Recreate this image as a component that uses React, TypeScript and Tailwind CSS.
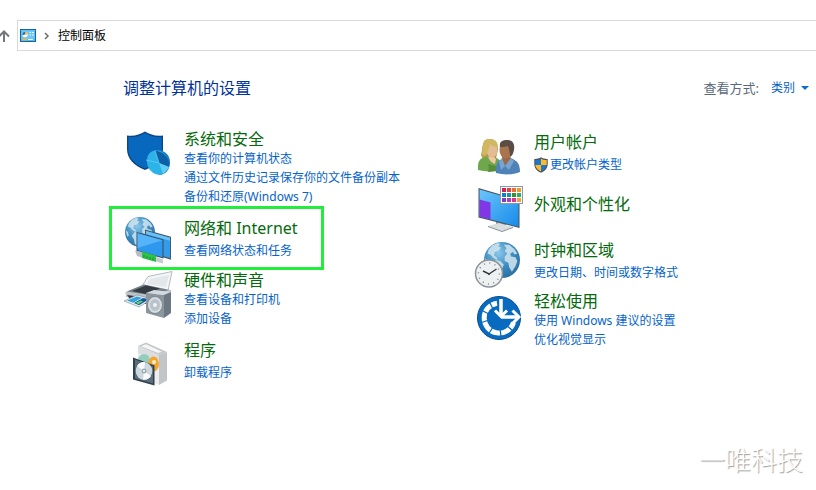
import type { ReactNode } from "react";

function Icon({ children }: { children: ReactNode }) {
  return (
    <svg viewBox="0 0 48 48" className="size-12 shrink-0 overflow-visible" aria-hidden="true">
      {children}
    </svg>
  );
}

function Globe({ id, cx, cy, r }: { id: string; cx: number; cy: number; r: number }) {
  return (
    <>
      <defs>
        <radialGradient id={id} cx="0.4" cy="0.3" r="0.75">
          <stop offset="0" stopColor="#8cc8ea" />
          <stop offset="0.55" stopColor="#3b8cc0" />
          <stop offset="1" stopColor="#2a6da0" />
        </radialGradient>
      </defs>
      <circle cx={cx} cy={cy} r={r} fill={`url(#${id})`} />
      <g transform={`translate(${cx - r} ${cy - r}) scale(${r / 20})`} fill="#d3e5ef" opacity="0.85">
        <path d="M5 9 9 4l6-3 3 1-2 3 3 1-3 4-4 1-1 4 3 2 1 3-4-2-4-4-3-1z" />
        <path d="M13 20l5 1 4 4-2 5-3 4-1 4-3-2-1-6-3-5z" />
        <path d="M22 3l6 0 6 5 3 5-3 1-2-3-3 2 1 3 5 1 2 4-2 6-4 6-3-5-1-5-4-2 0-5 3-3-3-3 2-3z" />
        <path d="M1 18l3 2 1 5-2 1z" />
      </g>
    </>
  );
}

function SecurityIcon() {
  return (
    <Icon>
      <path d="M3 6.500c7.500 1 12.500-.8 18-4 5.500 3.200 10.500 5 18 4V20c0 9.500-7 16.500-18 21C10 36.500 3 29.500 3 20z" fill="#0a4584" />
      <path d="M4.300 8c7 .7 11.500-1 16.700-4C26.200 7 30.700 8.700 37.700 8v12c0 8.800-6.400 15.200-16.700 19.500C10.700 35.200 4.300 28.800 4.300 20z" fill="#0868bd" />
      <path d="M36 21c7 2 10.500 7 10 13.500C45.500 41 41 46 35.500 46l-5-4z" fill="#1683bd" />
      <ellipse cx="33.500" cy="33.500" rx="10.500" ry="12.500" fill="#2cb3e8" transform="rotate(-20 33.500 33.500)" />
      <path d="M31 21.500l4 12.500 10 4c1.500-8-5-15.500-14-16.500z" fill="#0f5fa8" />
      <path d="M35 34l4 11 5-5 1-2z" fill="#5fd0f2" />
      <path d="M31 21.500 35 34l-13-3" fill="none" stroke="#67cdf0" strokeWidth="0.8" />
    </Icon>
  );
}

function NetworkIcon() {
  return (
    <Icon>
      <Globe id="globe-network" cx={16} cy={17} r={15} />
      <path d="m21 14.500 26 7.200v23L38 42V26l-17-5z" fill="#4b5a66" />
      <path d="m22 16 24 6.700v20.200L39 41V25l-17-5z" fill="#349be9" />
      <path d="m22 16 24 6.700v3L22 19z" fill="#69c2f7" />
      <path d="m12.500 17 27 7.500v19l-27-7.500z" fill="#3b4c5a" />
      <path d="m13.500 18.300 25 7V42.200l-25-7z" fill="#2e98ef" />
      <path d="m13.500 18.300 25 7L13.500 33z" fill="#55b4f7" />
      <path d="m11 35.500 7 1.500v5.500L13 41z" fill="#b7bdc1" />
      <path d="m18 36.500 14 4v6.500l-14-4z" fill="#2ec249" />
      <path d="M20 40v3M23 41v3M26 42v3M29 42.500v3" stroke="#158532" strokeWidth="0.8" />
      <path d="m32 42 7 2.500v4L32 46.500z" fill="#c6cbcf" />
    </Icon>
  );
}

function HardwareIcon() {
  return (
    <Icon>
      <path d="M24 6.500 48 1.500 44 21 18 16z" fill="#f3f5f6" stroke="#a5adb2" strokeWidth="0.8" />
      <path d="m26 9 19-4-3 12-19-3z" fill="#e3e7ea" />
      <path d="m1.500 22 18-7.500L47 20v5L24 31 2 27z" fill="#bcc4c9" />
      <path d="m3 21.500 17-7 25 5.500-20 5z" fill="#747d85" />
      <path d="m8 21 14-5.500 14 3-14 5.500z" fill="#343b42" />
      <path d="m3 25 22 3v7L6 29z" fill="#303942" />
      <path d="m0 31 13-6 15 4-13 8z" fill="#e8edf0" stroke="#7a858e" strokeWidth="0.6" />
      <path d="m3 30.500 10-4 5 1.200-9 5z" fill="#2fa4dd" />
      <path d="m10 33 9-5 6 1.200-10 6z" fill="#1458a4" />
      <path d="m12 32.500 5-2 2 1-5 3z" fill="#62cf70" />
      <path d="m22 23 18 2v23L22 43z" fill="#8b969f" />
      <path d="m22 23 8-3 17 2-7 3z" fill="#d4dbe0" />
      <path d="m40 25 7-3v21l-7 5z" fill="#6b7883" />
      <ellipse cx="31" cy="35" rx="7.500" ry="8.500" fill="#d5dbdf" stroke="#727d86" strokeWidth="0.8" />
      <ellipse cx="31" cy="35" rx="5" ry="6" fill="#b9c2c9" />
      <circle cx="31" cy="35" r="2" fill="#eff3f5" />
    </Icon>
  );
}

function ProgramsIcon() {
  return (
    <Icon>
      <path d="m14 6 21 8.500V45l-21-8z" fill="#eceded" />
      <path d="m14 6 8-3.500 21 9.500-8 3z" fill="#c4c7c9" />
      <path d="m17 6.300 5-2 16 7.500-4 1.200z" fill="#f5f6f6" />
      <path d="m14 6 21 9v5l-21-7z" fill="#dcddde" />
      <path d="m35 15 8-3v28.500l-8 4.500z" fill="#c2c5c8" />
      <circle cx="20" cy="20" r="6" fill="#93cdbd" />
      <ellipse cx="29.500" cy="24" rx="5.500" ry="7.500" fill="#f5a52d" />
      <circle cx="30" cy="22" r="2" fill="#fff1d1" />
      <path d="m9 17.500 21.500 8v20L9 39.500z" fill="#303f4c" />
      <path d="m11 19.500 18 7v17l-18-5z" fill="#5a6d7b" />
      <ellipse cx="20" cy="31" rx="8.300" ry="9" fill="#cfd8dd" />
      <path d="M20 31 13 26c2-3.500 5-4.500 8-4zM20 31l7 5c-2 3-5 4-8 3.500z" fill="#f8fafb" />
      <circle cx="20" cy="31" r="2.500" fill="#9dabb5" />
      <circle cx="20" cy="31" r="1" fill="#fff" />
    </Icon>
  );
}

function UsersIcon() {
  return (
    <Icon>
      <path d="M7 23c2-5 0-15 8-16 7-.5 9 5 9 11l-2 8-13 1z" fill="#b59a45" />
      <path d="M4 38c-.5-8 1-12 8-13h8c6 2 8 5 8 12-8 3-16 3-24 1z" fill="#6fa84c" />
      <path d="M14 25c2 4 4 6 7 7l1-5-3-3z" fill="#f0c7a2" />
      <ellipse cx="18" cy="18" rx="5.500" ry="7.500" fill="#e3bc94" />
      <path d="M8 23C9 9 9 7 16 7c6 0 8 4 8 8-4 0-6-1-8-3-1 5-2 9-5 12z" fill="#d0b863" />
      <path d="M14 40c1-3 1-6 0-8l8 2 2 5z" fill="#568f3c" />
      <path d="M22 41c-1-10 3-14 9-15h5c7 2 10 6 10 14-7 3-16 3-24 1z" fill="#4f83b8" />
      <path d="M28 26c1 4 2 6 3 8 4-2 6-5 6-8l-3-4h-5z" fill="#9b6848" />
      <ellipse cx="31.500" cy="18" rx="6" ry="8.500" fill="#a8754f" />
      <path d="M26 15c-1-5 2-7 7-7 6 0 8 4 7 10-1 4-2 6-4 7 0-5-1-8-2-11-3 1-6 1-8 1z" fill="#5b4d45" />
      <path d="m28 26 3 8-4 4-2-8zM37 26l-6 8 4 4 5-9z" fill="#78a4cf" />
    </Icon>
  );
}

const swatches = [
  "#d91f4a", "#e8413b", "#ef6a35", "#ed9a30",
  "#0f7fc7", "#1496a8", "#3f8f2f", "#2fae62",
  "#7a3fc0", "#b03fb5", "#e0348c", "#f0a13a",
];

function AppearanceIcon() {
  return (
    <Icon>
      <defs>
        <linearGradient id="screen" x1="0" y1="0" x2="1" y2="1">
          <stop offset="0" stopColor="#6cc4fb" />
          <stop offset="1" stopColor="#168be9" />
        </linearGradient>
      </defs>
      <path d="m22 36 10 3v5l-10-2z" fill="#8d969d" />
      <path d="m14 42 11-3 14 4-11 4z" fill="#d8dde0" />
      <path d="m14 42 14 5v1l-14-5zM28 47l11-4v1l-11 4z" fill="#838d94" />
      <path d="m4.500 4 41 12v28l-41-10.500z" fill="#46535e" />
      <path d="m5.500 5.500 39 11.300v26L5.500 32.600z" fill="url(#screen)" />
      <path d="m5.500 15.500 11 3v17l-11-2.900z" fill="#8137e6" />
      <rect x="26.500" y="2.500" width="22" height="17" fill="#fff" stroke="#8e989f" />
      {swatches.map((color, i) => (
        <rect key={color} x={28 + (i % 4) * 5} y={4 + Math.floor(i / 4) * 5} width="4" height="4" fill={color} />
      ))}
    </Icon>
  );
}

function ClockIcon() {
  return (
    <Icon>
      <Globe id="globe-clock" cx={28} cy={20} r={18} />
      <circle cx="15" cy="33.500" r="13.500" fill="#eef1f2" stroke="#8b9399" strokeWidth="1.500" />
      <circle cx="15" cy="33.500" r="10.500" fill="none" stroke="#79838a" strokeWidth="1.500" strokeDasharray="1 4.500" />
      <path d="m9 31 6 3 7.500-5" fill="none" stroke="#303940" strokeWidth="1.400" />
      <circle cx="15" cy="34" r="1" fill="#303940" />
    </Icon>
  );
}

function AccessIcon() {
  return (
    <Icon>
      <circle cx="25" cy="24" r="21.500" fill="#086bc0" stroke="#074e92" strokeWidth="1" />
      <path d="M39.500 28.500A15 15 0 1 1 23 9.200" fill="none" stroke="#fff" strokeWidth="5" />
      <path d="M15 7l4 8M7 16l8 4M6 29l9-3M14 41l5-8M27 43l-1-9M39 37l-7-6" stroke="#086bc0" strokeWidth="1.300" />
      <path d="M27 5v17M27 23h18" stroke="#fff" strokeWidth="3.500" />
      <path d="m21 16.500 6 6 6-6" fill="none" stroke="#fff" strokeWidth="3" />
      <path d="m38.500 16.500 6.500 6.500-6.500 6.500" fill="none" stroke="#fff" strokeWidth="3" />
    </Icon>
  );
}

function ShieldBadge() {
  return (
    <svg viewBox="0 0 14 16" className="h-4 w-3.5 shrink-0" aria-hidden="true">
      <path d="M7 .3c2 1.300 4 1.800 6.700 1.700v5c0 4-2.500 7-6.700 8.700C2.800 14 .3 11 .3 7V2C3 2.100 5 1.600 7 .3z" fill="#4b5259" />
      <path d="M7 1.600V8H1.300V3.100C3.500 3.200 5.300 2.700 7 1.600zM7 8h5.700c-.4 3-2.400 5-5.700 6.500z" fill="#1e76cd" />
      <path d="M7 1.600c1.700 1.100 3.500 1.600 5.700 1.500V8H7zM1.300 8H7v6.500C3.700 13 1.700 11 1.300 8z" fill="#fbbc27" />
    </svg>
  );
}

type CategoryProps = {
  icon: ReactNode;
  title: string;
  links?: string[];
  shield?: boolean;
  className?: string;
  iconClass?: string;
  textClass?: string;
};

function Category({ icon, title, links = [], shield = false, className = "", iconClass = "", textClass = "" }: CategoryProps) {
  return (
    <section className={`flex items-start gap-3 px-[15px] ${className}`}>
      <div className={iconClass}>{icon}</div>
      <div className={textClass}>
        <h2 className="text-base leading-5 whitespace-nowrap text-[#046a0b]">
          <a href="#">{title}</a>
        </h2>
        {links.length > 0 && (
          <ul className={links.length === 1 ? "pt-[3px]" : ""}>
            {links.map((link) => (
              <li key={link} className="text-xs leading-[19px] whitespace-nowrap text-[#0563c9]">
                <a href="#" className="flex items-center gap-0.5">
                  {shield && <ShieldBadge />}
                  {link}
                </a>
              </li>
            ))}
          </ul>
        )}
      </div>
    </section>
  );
}

export default function App() {
  return (
    <div className="bg-white font-['Noto_Sans','Noto_Sans_CJK_SC',sans-serif] text-black">
      <header className="flex items-center pt-5">
        <button type="button" aria-label="向上" className="w-[17px] shrink-0">
          <svg viewBox="0 0 10 12" className="h-3 w-2.5" fill="none" stroke="#73777b" strokeWidth="2">
            <path d="M4 12V1.500M-1 6.500l5-5 5 5" />
          </svg>
        </button>
        <nav className="flex h-[31px] grow items-center border border-r-0 border-[#d9d9d9] pl-0.5" aria-label="地址">
          <svg viewBox="0 0 16 13" className="h-[13px] w-4" aria-hidden="true">
            <rect x="0.500" y="0.500" width="15" height="12" fill="#54b8f2" stroke="#17669d" />
            <rect x="1.500" y="1.500" width="13" height="8.500" fill="#6cc6f8" />
            <circle cx="5" cy="5.500" r="2.800" fill="#fff" />
            <path d="M5 5.500V2.700a2.800 2.800 0 0 0-2.700 3.500z" fill="#1576bb" />
            <path d="M5 5.500V2.700A2.800 2.800 0 0 1 7.800 5.500z" fill="#f4b13d" />
            <path d="M9.500 3.500h1.500M12 3.500h2M9.500 6h1.500M12 6h2" stroke="#e8f6ff" />
            <path d="M2 10.500h5" stroke="#f6b633" strokeWidth="1.500" />
            <path d="M8 10.500h5" stroke="#e8f8ff" />
          </svg>
          <svg viewBox="0 0 6 8" className="mx-2 h-2 w-1.5" fill="none" stroke="#6f6f6f" strokeWidth="1.500" aria-hidden="true">
            <path d="m1 1 3 3-3 3" />
          </svg>
          <a href="#" className="text-xs leading-5">控制面板</a>
        </nav>
      </header>

      <main className="pr-[7px] pl-[109px]">
        <div className="flex items-center justify-between pt-[25px] pl-3.5">
          <h1 className="text-base leading-6 text-[#003399]">调整计算机的设置</h1>
          <div className="flex items-center gap-3">
            <label htmlFor="view-mode" className="text-[13px] leading-5 text-[#5b6878]">查看方式:</label>
            <div className="relative flex items-center">
              <select id="view-mode" className="w-[38px] appearance-none bg-transparent text-xs leading-5 text-[#0563c9] outline-none">
                <option>类别</option>
              </select>
              <svg viewBox="0 0 8 4" className="pointer-events-none absolute right-0 h-1 w-2" aria-hidden="true">
                <path d="M0 0h8L4 4z" fill="#0870d0" />
              </svg>
            </div>
          </div>
        </div>

        <div className="grid grid-cols-2 pt-[29px]">
          <div>
            <Category
              icon={<SecurityIcon />}
              title="系统和安全"
              links={["查看你的计算机状态", "通过文件历史记录保存你的文件备份副本", "备份和还原(Windows 7)"]}
            />
            <Category
              icon={<NetworkIcon />}
              title="网络和 Internet"
              links={["查看网络状态和任务"]}
              className="w-[215px] border-[3px] border-[#22ed3d] pr-0 pb-1 pl-3"
              iconClass="pt-1.5"
              textClass="pt-[9px]"
            />
            <Category
              icon={<HardwareIcon />}
              title="硬件和声音"
              links={["查看设备和打印机", "添加设备"]}
            />
            <Category
              icon={<ProgramsIcon />}
              title="程序"
              links={["卸载程序"]}
              className="pt-3"
            />
          </div>
          <div className="pt-[3px]">
            <Category icon={<UsersIcon />} title="用户帐户" links={["更改帐户类型"]} shield />
            <Category icon={<AppearanceIcon />} title="外观和个性化" className="pt-1" textClass="pt-2.5" />
            <Category icon={<ClockIcon />} title="时钟和区域" links={["更改日期、时间或数字格式"]} className="pt-2" />
            <Category
              icon={<AccessIcon />}
              title="轻松使用"
              links={["使用 Windows 建议的设置", "优化视觉显示"]}
              className="pt-[3px]"
              iconClass="pt-[3px]"
            />
          </div>
        </div>
      </main>

      <footer className="pt-14 pr-[13px] text-right text-[26px] leading-8 font-light text-white [text-shadow:1px_1px_1px_#999999]">
        一唯科技
      </footer>
    </div>
  );
}
